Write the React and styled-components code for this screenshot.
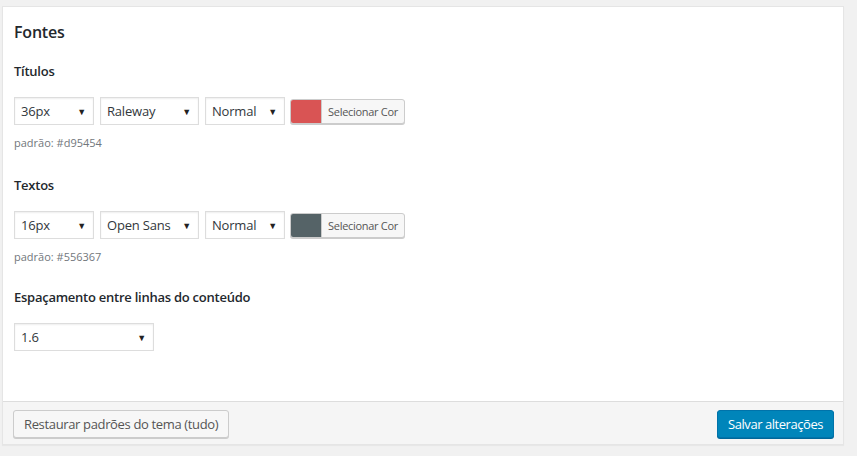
import styled, { createGlobalStyle } from "styled-components";

const GlobalStyle = createGlobalStyle`
    html, body {
        margin: 0;
        padding: 0;
        background: #f1f1f1;
        font-family: "Open Sans", "Noto Sans", sans-serif;
        color: #23282d;
    }
`;

const Page = styled.div`
    width: 857px;
    height: 456px;
    padding: 6px 13px 0 2px;
    box-sizing: border-box;
`;

const Panel = styled.div`
    border: 1px solid #e5e5e5;
    box-shadow: 0 1px 1px rgba(0, 0, 0, 0.04);
    background: #fff;
`;

const Body = styled.div`
    height: 394px;
    box-sizing: border-box;
    padding: 13px 11px 0 11px;
`;

const Heading = styled.h2`
    margin: 0 0 18px;
    font-size: 16px;
    line-height: 24px;
    font-weight: 600;
    letter-spacing: -0.2px;
    color: #23282d;
`;

const Label = styled.div`
    font-size: 13px;
    line-height: 18px;
    font-weight: 600;
    letter-spacing: -0.25px;
    color: #23282d;
    margin-bottom: 17px;
`;

const Group = styled.div`
    margin-bottom: ${({ $gap }) => $gap}px;
`;

const Row = styled.div`
    display: flex;
    align-items: center;
    gap: 6px;
`;

const Select = styled.div`
    width: ${({ $w }) => $w}px;
    height: 28px;
    box-sizing: border-box;
    border: 1px solid #ddd;
    box-shadow: inset 0 1px 2px rgba(0, 0, 0, 0.07);
    display: flex;
    align-items: center;
    justify-content: space-between;
    padding: 0 7px 0 6px;
    font-size: 13px;
    letter-spacing: -0.2px;
    color: #32373c;
    background: #fff;
`;

const Arrow = styled.span`
    font-size: 9px;
    color: #222;
`;

const ColorButton = styled.div`
    display: flex;
    align-items: stretch;
    width: 115px;
    box-sizing: border-box;
    height: 25px;
    margin-left: -1px;
    border: 1px solid #ccc;
    border-radius: 3px;
    box-shadow: 0 1px 0 #ccc;
    background: #f7f7f7;
    overflow: hidden;
`;

const Swatch = styled.span`
    width: 30px;
    flex: none;
    background: ${({ $color }) => $color};
`;

const ColorText = styled.span`
    flex: 1;
    display: flex;
    align-items: center;
    justify-content: center;
    font-size: 11px;
    letter-spacing: -0.3px;
    color: #555;
    border-left: 1px solid #ccc;
`;

const Hint = styled.div`
    margin-top: 10px;
    font-size: 11px;
    line-height: 16px;
    color: #72777c;
`;

const Footer = styled.div`
    display: flex;
    justify-content: space-between;
    align-items: center;
    padding: 8px 9px 6px 10px;
    background: #f5f5f5;
    border-top: 1px solid #ddd;
`;

const Button = styled.button`
    height: 28px;
    padding: 0 10px;
    font-family: "Open Sans", "Noto Sans", sans-serif;
    font-size: 13px;
    letter-spacing: ${({ $primary }) => ($primary ? "-0.45px" : "-0.35px")};
    border-radius: 3px;
    border: 1px solid ${({ $primary }) => ($primary ? "#0073aa" : "#ccc")};
    background: ${({ $primary }) => ($primary ? "#0085ba" : "#f7f7f7")};
    color: ${({ $primary }) => ($primary ? "#fff" : "#555")};
    box-shadow: ${({ $primary }) => ($primary ? "0 1px 0 #006799" : "0 1px 0 #ccc")};
`;

const fontRows = [
    { label: "Títulos", size: "36px", family: "Raleway", color: "#d95454", gap: 25 },
    { label: "Textos", size: "16px", family: "Open Sans", color: "#556367", gap: 23 },
];

function FontRow({ label, size, family, color, gap }) {
    return (
        <Group $gap={gap}>
            <Label>{label}</Label>
            <Row>
                <Select $w={80}>
                    {size}
                    <Arrow>▼</Arrow>
                </Select>
                <Select $w={99}>
                    {family}
                    <Arrow>▼</Arrow>
                </Select>
                <Select $w={80}>
                    Normal
                    <Arrow>▼</Arrow>
                </Select>
                <ColorButton>
                    <Swatch $color={color} />
                    <ColorText>Selecionar Cor</ColorText>
                </ColorButton>
            </Row>
            <Hint>padrão: {color}</Hint>
        </Group>
    );
}

export default function App() {
    return (
        <>
            <GlobalStyle />
            <Page>
                <Panel>
                    <Body>
                        <Heading>Fontes</Heading>
                        {fontRows.map((r) => (
                            <FontRow key={r.label} {...r} />
                        ))}
                        <Label>Espaçamento entre linhas do conteúdo</Label>
                        <Select $w={140}>
                            1.6
                            <Arrow>▼</Arrow>
                        </Select>
                    </Body>
                    <Footer>
                        <Button>Restaurar padrões do tema (tudo)</Button>
                        <Button $primary>Salvar alterações</Button>
                    </Footer>
                </Panel>
            </Page>
        </>
    );
}
